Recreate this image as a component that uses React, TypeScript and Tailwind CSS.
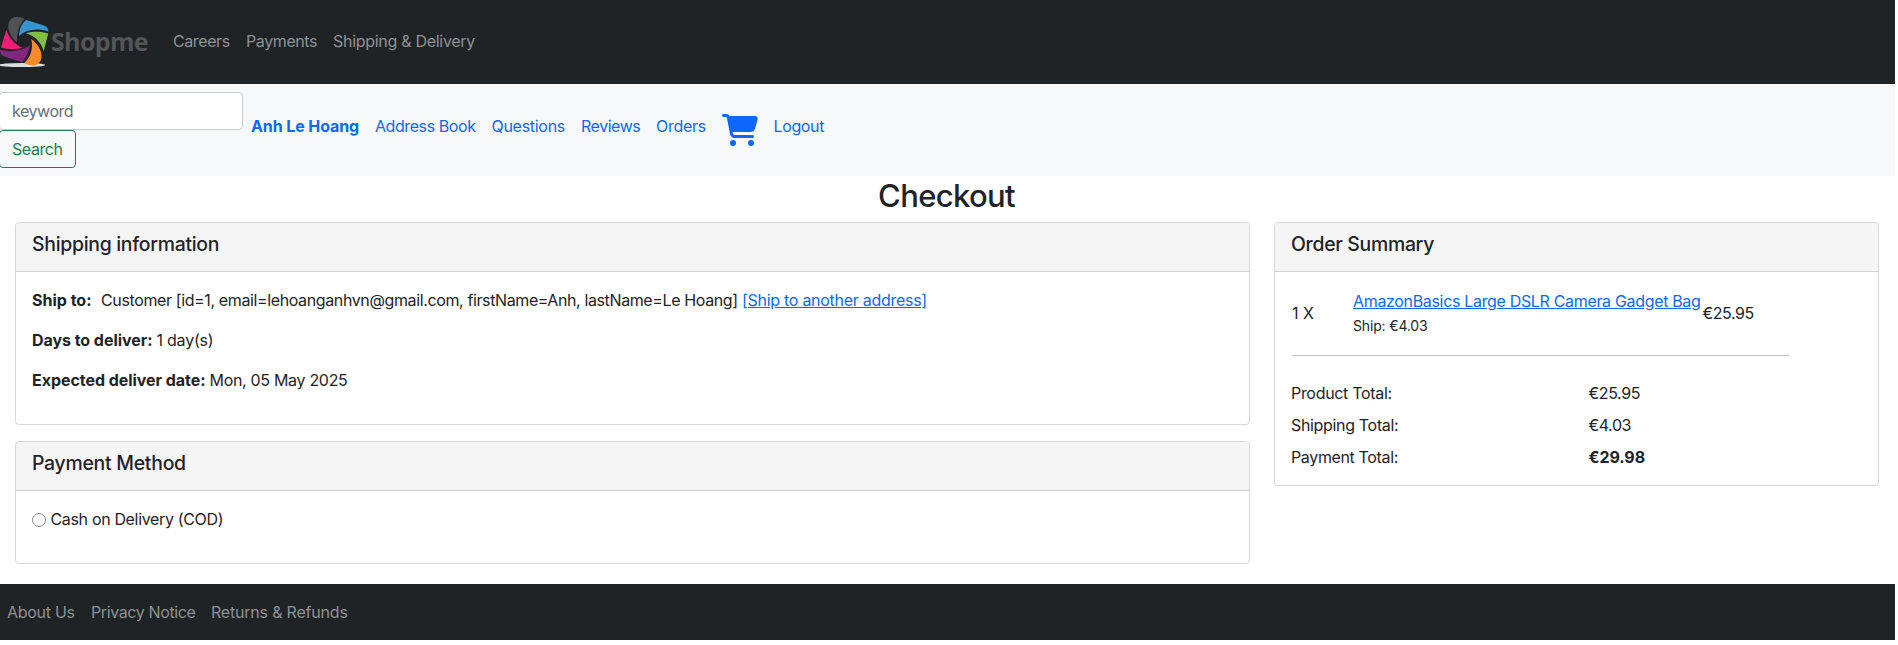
import type { ReactNode } from 'react';
import { FaCartShopping } from 'react-icons/fa6';

function Logo() {
  return (
    <a href="#" className="flex h-[52px] w-[150px] items-start">
      <svg className="shrink-0" width="51" height="52" viewBox="0 16 51 52" aria-hidden="true">
        <ellipse cx="22" cy="65" rx="23" ry="2.1" fill="#dcdfdf" />
        <path d="M8.6 23C10 18.5 13.5 17 17 17C20 17 22.5 17.6 24.4 18.8C19 25.5 16.8 33 17 42.5C11.5 38 6.8 30 8.6 23Z" fill="#505153" />
        <path d="M26.2 20L44 25.5C46.8 26.6 48.3 28.5 48.4 31.4C37 28 27 29 19 36C19.4 29 21.5 23.6 26.2 20Z" fill="#3793d1" />
        <path d="M26 33.3C33 31.2 41 31.4 48.2 33.6L43.7 51.3C41 42.5 35.5 36 26 33.3Z" fill="#80bf42" />
        <path d="M31.3 39C37.5 43.5 42.5 51 41.4 58C40.6 62.5 37.5 65.3 33.5 65.4C30 65.4 26.8 64.4 24.2 63C30.5 57 33.5 49 31.3 39Z" fill="#f68a2c" />
        <path d="M30 45.5C28.8 52 26.5 57.5 22.4 62.2L4 56.6C1.4 55.4 0 53 0 49.8C10 52.4 21.5 51.5 30 45.5Z" fill="#84257f" />
        <path d="M6.2 30C9.5 38.5 14.5 44.5 22.6 47.8C15.5 50 7.5 49.4 1 47.6Z" fill="#ed1e74" />
      </svg>
      <span className="mt-[7px] font-['Open_Sans'] text-[25px] leading-[36px] font-bold tracking-[-0.65px] text-[#545557]">Shopme</span>
    </a>
  );
}

function Card({ title, titleClass, bodyClass, children }: { title: string; titleClass: string; bodyClass: string; children: ReactNode }) {
  return (
    <section className="overflow-hidden rounded border border-[#d6d7d8] bg-white">
      <header className="h-[49px] border-b border-[#d0d1d2] bg-[#f5f5f5] px-4 pt-[9px]">
        <h5 className={'text-[19.4px] leading-6 font-medium ' + titleClass}>{title}</h5>
      </header>
      <div className={'px-4 pt-4 ' + bodyClass}>{children}</div>
    </section>
  );
}

export default function App() {
  return (
    <div className="min-h-[645px] bg-white font-['Inter',sans-serif] text-base leading-6 text-[#1f2326]">
      <div className="w-[1895px]">
        <nav className="flex h-[84px] items-center bg-[#1f2326] text-[#8f9192]">
          <Logo />
          <ul className="mb-0.5 ml-[23px] flex gap-4">
            <li className="w-[57px] tracking-[-0.4px]">Careers</li>
            <li className="w-[71px] tracking-[-0.4px]">Payments</li>
            <li className="tracking-[-0.29px] whitespace-nowrap">Shipping &amp; Delivery</li>
          </ul>
        </nav>

        <nav className="flex h-[92px] items-start bg-[#f7f8fa] pt-2 text-[#0d67fa]">
          <form className="-ml-px w-[244px]">
            <input
              type="text"
              placeholder="keyword"
              className="block h-[38px] w-full rounded border border-[#c9ced4] bg-white px-3 tracking-[-0.46px] placeholder:text-[#676d74] placeholder:opacity-100"
            />
            <button type="button" className="block h-[38px] w-[77px] rounded border border-[#217c50] pb-px pl-3 text-left tracking-[-0.42px] text-[#217c50]">
              Search
            </button>
          </form>
          <ul className="mt-[22px] ml-2 flex gap-4 whitespace-nowrap">
            <li className="w-[108px] font-bold tracking-[-0.1px]">Anh Le Hoang</li>
            <li className="w-[100.5px] tracking-[-0.42px]">Address Book</li>
            <li className="w-[73.5px] tracking-[-0.29px]">Questions</li>
            <li className="w-[59px] tracking-[-0.46px]">Reviews</li>
            <li className="w-[50px] tracking-[-0.27px]">Orders</li>
            <li className="w-[35.5px]">
              <FaCartShopping className="h-8 w-9" />
            </li>
            <li className="tracking-[-0.37px]">Logout</li>
          </ul>
        </nav>

        <h2 className="h-[46px] pt-px pr-0.5 text-center text-[31px] leading-[38px] font-medium tracking-[-0.65px]">Checkout</h2>

        <main className="flex h-[362px] items-start gap-6 pl-[15px]">
          <div className="flex w-[1235px] flex-col gap-4">
            <Card title="Shipping information" titleClass="tracking-[-0.28px]" bodyClass="flex h-[152px] flex-col gap-4 whitespace-nowrap">
              <div className="flex">
                <b className="w-[69px] font-bold">Ship to:</b>
                <span className="w-[641px] tracking-[-0.378px]">
                  Customer [id=1, email=lehoanganhvn@gmail.com, firstName=Anh, lastName=Le Hoang]
                </span>
                <a href="#" className="tracking-[-0.28px] text-[#0d67fa] underline">[Ship to another address]</a>
              </div>
              <div className="flex">
                <b className="w-[124.5px] font-bold tracking-[-0.05px]">Days to deliver:</b>
                <span className="tracking-[-0.23px]">1 day(s)</span>
              </div>
              <div className="flex">
                <b className="w-[177.5px] font-bold tracking-[-0.05px]">Expected deliver date:</b>
                <span className="tracking-[-0.31px]">Mon, 05 May 2025</span>
              </div>
            </Card>
            <Card title="Payment Method" titleClass="tracking-[-0.25px]" bodyClass="h-[72px]">
              <label className="flex items-center gap-[4.5px] tracking-[-0.34px]">
                <input type="radio" name="payment" className="mt-px h-[14px] w-[14px] appearance-none rounded-full border border-[#85858d] bg-white" />
                Cash on Delivery (COD)
              </label>
            </Card>
          </div>

          <div className="w-[605px]">
            <Card title="Order Summary" titleClass="tracking-[-0.28px]" bodyClass="h-[213px] whitespace-nowrap">
              <div className="flex h-[50px] items-center">
                <span className="w-[62px] pl-px">1 X</span>
                <div className="w-[349.5px] pt-px">
                  <a href="#" className="block w-[347px] tracking-[-0.33px] text-[#0d67fa] underline">AmazonBasics Large DSLR Camera Gadget Bag</a>
                  <div className="pt-px text-sm leading-6 tracking-[-0.16px]">Ship: €4.03</div>
                </div>
                <span className="tracking-[-0.42px]">€25.95</span>
              </div>
              <hr className="mt-[17px] ml-px w-[497px] border-[#bfc0c1]" />
              <dl className="mt-[25px] grid grid-cols-[297.5px_auto] gap-y-2">
                <dt className="tracking-[-0.31px]">Product Total:</dt>
                <dd className="tracking-[-0.39px]">€25.95</dd>
                <dt className="tracking-[-0.33px]">Shipping Total:</dt>
                <dd className="tracking-[-0.42px]">€4.03</dd>
                <dt className="tracking-[-0.36px]">Payment Total:</dt>
                <dd className="font-bold tracking-[-0.07px]">€29.98</dd>
              </dl>
            </Card>
          </div>
        </main>

        <footer className="flex h-14 items-center bg-[#1f2326] pb-px pl-[7px] text-[#8f9192]">
          <ul className="flex gap-4 whitespace-nowrap">
            <li className="w-[68px] tracking-[-0.29px]">About Us</li>
            <li className="w-[104px] tracking-[-0.38px]">Privacy Notice</li>
            <li className="tracking-[-0.2px]">Returns &amp; Refunds</li>
          </ul>
        </footer>
      </div>
    </div>
  );
}
